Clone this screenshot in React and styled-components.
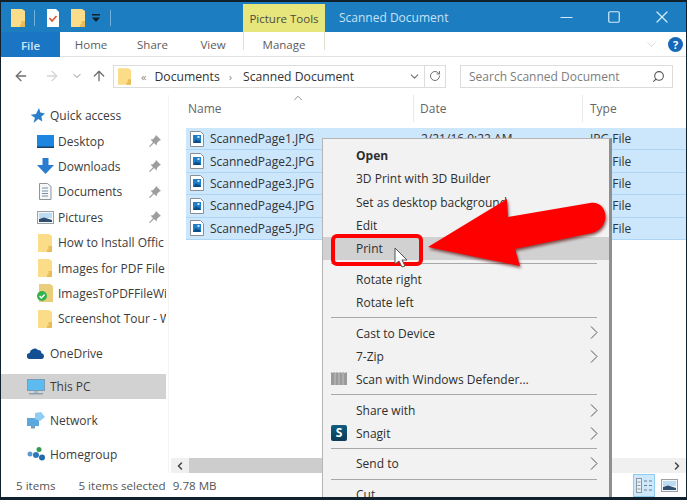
import styled, { createGlobalStyle } from "styled-components";
import { ArrowLeft, ArrowRight, ArrowUp, ChevronDown, ChevronUp, ChevronLeft, ChevronRight, Minus, Square, X, RotateCw, Search } from "lucide-react";

const GlobalStyle = createGlobalStyle`
  * { box-sizing: border-box; }
  html, body { margin: 0; padding: 0; background: #fff; overflow: hidden; }
  body { font-family: "Open Sans", "Noto Sans", sans-serif; font-size: 12px; color: #3a3a3a; }
`;

const Window = styled.div`
  position: relative;
  width: 687px;
  height: 500px;
  display: flex;
  flex-direction: column;
  overflow: hidden;
  background: #fff;
  border-style: solid;
  border-color: #10202c;
  border-width: 2px 1px 3px 1px;
`;

const TitleBar = styled.div`
  height: 30px;
  flex: none;
  display: flex;
  background: #1d7dc1;
`;

const QuickBar = styled.div`
  width: 242px;
  display: flex;
  align-items: center;
  padding-left: 10px;
  margin-top: 2px;
`;

const QuickSep = styled.div`
  width: 1px;
  height: 16px;
  margin: 0 12px 0 9px;
  background: #6fb0dc;
`;

const PictureTools = styled.div`
  width: 82px;
  margin-top: 2px;
  display: flex;
  align-items: center;
  justify-content: center;
  background: #e6e67c;
  color: #4c4c3c;
  font-size: 11.5px;
`;

const WindowTitle = styled.div`
  margin-left: 14px;
  margin-top: 1px;
  align-self: center;
  color: #c6e2f6;
  font-size: 12px;
`;

const Controls = styled.div`
  margin-left: auto;
  display: flex;
`;

const ControlButton = styled.div`
  width: 48px;
  display: flex;
  align-items: center;
  justify-content: center;
  color: #d5ebfa;
`;

const RibbonTabs = styled.div`
  height: 25px;
  flex: none;
  display: flex;
  align-items: stretch;
  border-bottom: 1px solid #e2e2e2;
`;

const Tab = styled.div`
  width: ${(p) => p.$width}px;
  display: flex;
  align-items: center;
  justify-content: center;
  padding-top: 1px;
  font-size: 11.5px;
  color: #5c5c5c;
`;

const FileTab = styled(Tab)`
  background: #1a76c4;
  color: #cfe6f8;
  font-weight: 600;
  margin-bottom: -1px;
`;

const ManageTab = styled(Tab)`
  border-left: 1px solid #e0e0d0;
  border-right: 1px solid #e0e0d0;
  margin-bottom: 6px;
  padding-top: 6px;
`;

const RibbonRight = styled.div`
  margin-left: auto;
  display: flex;
  align-items: center;
  gap: 9px;
  padding-right: 3px;
  color: #c4c4c4;
`;

const HelpDot = styled.div`
  width: 15px;
  height: 15px;
  border-radius: 50%;
  background: #1567b8;
  color: #fff;
  font-size: 11px;
  font-weight: 700;
  display: flex;
  align-items: center;
  justify-content: center;
`;

const AddressRow = styled.div`
  height: 38px;
  flex: none;
  display: flex;
  align-items: center;
  padding-left: 12px;
`;

const NavButton = styled.div`
  display: flex;
  margin-left: ${(p) => p.$gap || 0}px;
  color: ${(p) => p.$color};
`;

const AddressBox = styled.div`
  margin-left: 6px;
  width: 333px;
  height: 23px;
  display: flex;
  align-items: center;
  border: 1px solid #dcdcdc;
  padding-left: 4px;
  color: #333;
  font-size: 12.2px;
`;

const Crumb = styled.span`
  margin-left: ${(p) => p.$gap}px;
`;

const CrumbSep = styled.span`
  margin-left: ${(p) => p.$gap}px;
  color: #8a8a8a;
  font-size: 11px;
`;

const AddressEnd = styled.div`
  margin-left: auto;
  height: 100%;
  display: flex;
  align-items: center;
  color: #707070;
`;

const RefreshCell = styled.div`
  width: 21px;
  height: 100%;
  margin-left: 3px;
  display: flex;
  align-items: center;
  justify-content: center;
  border-left: 1px solid #dcdcdc;
`;

const SearchBox = styled.div`
  margin-left: 14px;
  width: 213px;
  height: 23px;
  display: flex;
  align-items: center;
  justify-content: space-between;
  padding: 0 7px 0 8px;
  border: 1px solid #dcdcdc;
  color: #7d7d7d;
  font-size: 12px;
`;

const SearchGlyph = styled(Search)`
  color: #555;
  transform: scaleX(-1);
`;

const Main = styled.div`
  flex: 1;
  min-height: 0;
  display: flex;
`;

const Sidebar = styled.div`
  width: 168px;
  flex: none;
  padding-top: 8px;
  border-right: 1px solid #f4f4f4;
`;

const NavRow = styled.div`
  width: 165px;
  height: 25.4px;
  margin-top: ${(p) => p.$top || 0}px;
  display: flex;
  align-items: center;
  white-space: nowrap;
  overflow: hidden;
  font-size: 12px;
  color: #3c3c3c;
  background: ${(p) => (p.$active ? "#d2d2d2" : "transparent")};
  padding-left: ${(p) => (p.$child ? 35 : 26)}px;
`;

const NavIcon = styled.span`
  width: 18px;
  margin-right: ${(p) => (p.$child ? 4 : 5)}px;
  flex: none;
  display: flex;
  align-items: center;
  justify-content: center;
`;

const NavLabel = styled.span`
  flex: 1;
  overflow: hidden;
`;

const PinSlot = styled.span`
  width: 17px;
  flex: none;
  display: flex;
`;

const Content = styled.div`
  flex: 1;
  min-width: 0;
  display: flex;
  flex-direction: column;
`;

const ColumnHead = styled.div`
  position: relative;
  height: 33px;
  flex: none;
  display: grid;
  grid-template-columns: 245px 169px 1fr;
  align-items: center;
  color: #666;
  font-size: 12px;
  padding-bottom: 6px;
`;

const HeadCell = styled.div`
  height: 27px;
  display: flex;
  align-items: center;
  padding-left: ${(p) => p.$pad}px;
  border-right: 1px solid ${(p) => (p.$plain ? "transparent" : "#e8e8e8")};
`;

const SortCaret = styled.span`
  position: absolute;
  left: 122px;
  top: -4px;
  display: flex;
  color: #808080;
`;

const FileList = styled.div`
  flex: 1;
  min-height: 0;
  padding-left: 17px;
`;

const FileRow = styled.div`
  height: 22.4px;
  display: grid;
  grid-template-columns: 235px 169px 1fr;
  align-items: center;
  background: #cce6fb;
  border-bottom: 1px solid #aed6f4;
  font-size: 12px;
  color: #333;
  white-space: nowrap;
`;

const FileName = styled.div`
  display: flex;
  align-items: center;
  gap: 6px;
  padding-left: 4px;
`;

const ScrollBar = styled.div`
  height: 15px;
  flex: none;
  display: flex;
  align-items: center;
  background: #f0f0f0;
  margin-left: 2px;
  color: #444;
`;

const ScrollArrow = styled.div`
  width: 18px;
  height: 100%;
  flex: none;
  display: flex;
  align-items: center;
  justify-content: center;
`;

const ScrollThumb = styled.div`
  height: 100%;
  flex: 1;
  margin-right: 60px;
  background: #cdcdcd;
`;

const StatusBar = styled.div`
  height: 24px;
  flex: none;
  display: flex;
  align-items: center;
  padding-left: 15px;
  font-size: 11.6px;
  color: #555;
`;

const StatusText = styled.span`
  margin-left: ${(p) => p.$gap || 0}px;
  white-space: nowrap;
`;

const ViewButtons = styled.div`
  margin-left: auto;
  height: 100%;
  display: flex;
  align-items: center;
  gap: 3px;
  padding-right: 6px;
`;

const ViewButton = styled.div`
  width: 22px;
  height: 23px;
  display: flex;
  align-items: center;
  justify-content: center;
  background: ${(p) => (p.$on ? "#cde8fa" : "transparent")};
  border: 1px solid ${(p) => (p.$on ? "#8fcdf0" : "transparent")};
`;

const ContextMenu = styled.div`
  position: absolute;
  left: 321px;
  top: 136px;
  width: 290px;
  background: #f2f2f2;
  border: 1px solid #b5b5b5;
  border-right: 3px solid #8f8f8f;
  padding-top: 5px;
  font-size: 12px;
  color: #2e2e2e;
`;

const MenuItem = styled.div`
  position: relative;
  height: 23.3px;
  display: flex;
  align-items: center;
  padding-left: 33px;
  white-space: nowrap;
  font-weight: ${(p) => (p.$bold ? 700 : 400)};
  background: ${(p) => (p.$hot ? "#d1d1d1" : "transparent")};
`;

const MenuIcon = styled.span`
  position: absolute;
  left: 8px;
  top: 3px;
  display: flex;
`;

const SubArrow = styled.svg`
  position: absolute;
  right: 11px;
  top: 5px;
`;

const MenuSep = styled.div`
  height: 1px;
  margin: 3px 12px 3.2px 8px;
  background: #a8a8a8;
`;

const SnagitBadge = styled.span`
  width: 16px;
  height: 16px;
  border-radius: 2px;
  background: linear-gradient(#0f5d80, #0b3a55);
  color: #fff;
  font-size: 12px;
  font-weight: 700;
  line-height: 16px;
  text-align: center;
`;

const PrintCallout = styled.div`
  position: absolute;
  left: 330px;
  top: 232px;
  width: 92px;
  height: 32px;
  border: 4.5px solid #ff0000;
  border-radius: 6px;
`;

const BigArrow = styled.svg`
  position: absolute;
  left: 419px;
  top: 188px;
  filter: drop-shadow(1px 2px 1.5px rgba(80, 0, 0, 0.65));
`;

const Pointer = styled.svg`
  position: absolute;
  left: 393px;
  top: 245px;
`;

const FolderIcon = ({ w = 14, h = 18 }) => (
  <svg width={w} height={h} viewBox="0 0 14 18">
    <path d="M0 0h11l3 2v16H0z" fill="#fbdc88" />
    <path d="M14 12v6H9v-2.5h1.5V12z" fill="#e8bd58" />
  </svg>
);

const CheckFolder = () => (
  <svg width="16" height="18" viewBox="0 0 16 18">
    <path d="M2 0h11l3 2v16H2z" fill="#e9cf7c" />
    <circle cx="5" cy="12" r="5" fill="#32b24a" />
    <path d="M2.6 12l1.8 1.9 3.2-3.4" fill="none" stroke="#fff" strokeWidth="1.4" />
  </svg>
);

const ImageFileIcon = () => (
  <svg width="14" height="16" viewBox="0 0 14 16">
    <path d="M.5.5h10l3 3v12H.5z" fill="#fff" stroke="#8a8f96" />
    <rect x="3" y="4" width="8" height="8" fill="#1e7fc8" />
    <path d="M3 12l3-4 2 2 1-1 2 3z" fill="#0d4d86" />
    <rect x="7.5" y="5" width="2" height="2" fill="#cfe8fa" />
  </svg>
);

const PinIcon = () => (
  <svg width="12" height="12" viewBox="0 0 12 12">
    <path d="M7 0l5 5-1.5.6L8 8l-.4 2.5L5 8l-4 4-1-.5L4 7.3 1.5 4.6 4 4.2 6.4 1.6z" fill="#9d9d9d" />
  </svg>
);

const StarIcon = () => (
  <svg width="18" height="15" viewBox="-3 0 18 15">
    <path d="M9 0l1.4 4.6L15 5.6l-3.6 3 .9 5L8.3 11 3.6 15l1.3-5.2L.6 6.8l5.4-.8z" fill="#2a7fc9" />
  </svg>
);

const DesktopIcon = () => (
  <svg width="17" height="13" viewBox="0 0 17 13">
    <rect width="17" height="13" fill="#1c86e0" />
    <rect y="11.5" width="17" height="1.5" fill="#17416a" />
  </svg>
);

const DownloadIcon = () => (
  <svg width="17" height="16" viewBox="0 0 17 16">
    <path d="M5.5 0h6v7H17l-8.5 9L0 7h5.5z" fill="#2a7cd0" />
  </svg>
);

const DocumentIcon = () => (
  <svg width="14" height="17" viewBox="0 0 14 17">
    <path d="M1.5.5h8l3.500 3v13h-11.500z" fill="#f5f7f9" stroke="#8e959c" />
    <path d="M4 5h6M4 8h6M4 10.500h6M4 13h6" stroke="#7891a8" />
  </svg>
);

const PictureIcon = () => (
  <svg width="17" height="13" viewBox="0 0 17 13">
    <rect x=".5" y=".5" width="16" height="12" fill="#f4f6f8" stroke="#9aa0a6" />
    <rect x="2" y="2" width="13" height="5" fill="#bcdcf2" />
    <path d="M2 11V8l5-1.500L15 9v2z" fill="#2f4f70" />
  </svg>
);

const CloudIcon = () => (
  <svg width="18" height="12" viewBox="0 0 18 12">
    <path d="M3 12a3 3 0 0 1-.4-6A5 5 0 0 1 11 3a3.500 3.500 0 0 1 3.500 3.200A3 3 0 0 1 15 12z" fill="#144f94" />
  </svg>
);

const MonitorIcon = () => (
  <svg width="18" height="16" viewBox="0 0 18 16">
    <rect x=".5" y=".5" width="17" height="11" fill="#5cbcf0" stroke="#7a9db5" />
    <rect x="7" y="12" width="4" height="2" fill="#a8b8c4" />
    <rect x="2" y="14" width="14" height="1.500" fill="#8aa0b0" />
  </svg>
);

const NetworkIcon = () => (
  <svg width="18" height="17" viewBox="0 0 18 17">
    <rect x="0" y="6" width="12" height="8" fill="#5ba8dc" />
    <path d="M8 1l6-1 4 5-5 4-5-2z" fill="#8fcdf2" />
    <rect x="4" y="14" width="4" height="2.500" fill="#7a9db5" />
  </svg>
);

const HomegroupIcon = () => (
  <svg width="18" height="14" viewBox="0 0 18 14">
    <circle cx="3" cy="7" r="2.500" fill="#5c9bd0" />
    <circle cx="12" cy="2.500" r="2.500" fill="#2f9a4e" />
    <circle cx="9" cy="8" r="3" fill="#2c78bc" />
    <circle cx="15" cy="10.500" r="3" fill="#246aa8" />
  </svg>
);

const ChecklistIcon = () => (
  <svg width="12" height="18" viewBox="0 0 12 18">
    <path d="M0 0h9l3 3v15H0z" fill="#fff" />
    <path d="M2.500 9l2.500 3 4.500-5" fill="none" stroke="#d8512d" strokeWidth="1.600" />
  </svg>
);

const DropMark = () => (
  <svg width="10" height="9" viewBox="0 0 10 9">
    <rect x="1" y="0" width="8" height="1.500" fill="#10202c" />
    <path d="M1 3.500h8L5 8z" fill="#10202c" />
  </svg>
);

const DefenderIcon = () => (
  <svg width="16" height="14" viewBox="0 0 16 14">
    <path d="M0 1l2 1 1-1 2 1 1-1 2 1 1-1 2 1 1-1 2 1 2-1v13H0z" fill="#9a9a9a" />
    <path d="M4 2v12M8 2v12M12 2v12" stroke="#c2c2c2" />
  </svg>
);

const DetailsIcon = () => (
  <svg width="17" height="15" viewBox="0 0 17 15">
    <rect x=".5" y=".5" width="5" height="14" fill="#e7f1f8" stroke="#8a97a2" />
    <path d="M1.500 4h3M1.500 7.500h3M1.500 11h3" stroke="#8a97a2" />
    <path d="M8 3h3M13 3h3M8 7.500h3M13 7.500h3M8 12h3M13 12h3" stroke="#6d7d8a" />
  </svg>
);

const files = ["ScannedPage1.JPG", "ScannedPage2.JPG", "ScannedPage3.JPG", "ScannedPage4.JPG", "ScannedPage5.JPG"];

const pinned = [
  ["Desktop", <DesktopIcon />],
  ["Downloads", <DownloadIcon />],
  ["Documents", <DocumentIcon />],
  ["Pictures", <PictureIcon />],
];

const recent = [
  ["How to Install Offic", <FolderIcon />],
  ["Images for PDF File", <FolderIcon />],
  ["ImagesToPDFFileWi", <CheckFolder />],
  ["Screenshot Tour - W", <FolderIcon />],
];

const More = () => (
  <SubArrow width="8" height="13" viewBox="0 0 8 13">
    <path d="M1 .5l6 6-6 6" fill="none" stroke="#555" />
  </SubArrow>
);

function App() {
  return (
    <Window>
      <GlobalStyle />
      <TitleBar>
        <QuickBar>
          <FolderIcon />
          <QuickSep />
          <ChecklistIcon />
          <NavButton $gap={12}><FolderIcon /></NavButton>
          <NavButton $gap={6}><DropMark /></NavButton>
          <QuickSep />
        </QuickBar>
        <PictureTools>Picture Tools</PictureTools>
        <WindowTitle>Scanned Document</WindowTitle>
        <Controls>
          <ControlButton><Minus size={19} strokeWidth={1.2} absoluteStrokeWidth /></ControlButton>
          <ControlButton><Square size={14} strokeWidth={1.2} absoluteStrokeWidth /></ControlButton>
          <ControlButton><X size={20} strokeWidth={1.2} absoluteStrokeWidth /></ControlButton>
        </Controls>
      </TitleBar>

      <RibbonTabs>
        <FileTab $width={59}>File</FileTab>
        <Tab $width={62}>Home</Tab>
        <Tab $width={61}>Share</Tab>
        <Tab $width={60}>View</Tab>
        <ManageTab $width={82}>Manage</ManageTab>
        <RibbonRight>
          <ChevronDown size={15} strokeWidth={1} />
          <HelpDot>?</HelpDot>
        </RibbonRight>
      </RibbonTabs>

      <AddressRow>
        <NavButton $color="#6e6e6e"><ArrowLeft size={16} /></NavButton>
        <NavButton $gap={15} $color="#d4d4d4"><ArrowRight size={16} /></NavButton>
        <NavButton $gap={11} $color="#8c8c8c"><ChevronDown size={12} /></NavButton>
        <NavButton $gap={8} $color="#6e6e6e"><ArrowUp size={16} /></NavButton>
        <AddressBox>
          <FolderIcon w={13} h={17} />
          <CrumbSep $gap={10}>«</CrumbSep>
          <Crumb $gap={8}>Documents</Crumb>
          <CrumbSep $gap={9}>›</CrumbSep>
          <Crumb $gap={11}>Scanned Document</Crumb>
          <AddressEnd>
            <ChevronDown size={13} />
            <RefreshCell><RotateCw size={12} /></RefreshCell>
          </AddressEnd>
        </AddressBox>
        <SearchBox>
          Search Scanned Document
          <SearchGlyph size={13} />
        </SearchBox>
      </AddressRow>

      <Main>
        <Sidebar>
          <NavRow>
            <NavIcon><StarIcon /></NavIcon>
            <NavLabel>Quick access</NavLabel>
          </NavRow>
          {pinned.map(([label, icon]) => (
            <NavRow $child key={label}>
              <NavIcon $child>{icon}</NavIcon>
              <NavLabel>{label}</NavLabel>
              <PinSlot><PinIcon /></PinSlot>
            </NavRow>
          ))}
          {recent.map(([label, icon]) => (
            <NavRow $child key={label}>
              <NavIcon $child>{icon}</NavIcon>
              <NavLabel>{label}</NavLabel>
            </NavRow>
          ))}
          <NavRow $top={9}>
            <NavIcon><CloudIcon /></NavIcon>
            <NavLabel>OneDrive</NavLabel>
          </NavRow>
          <NavRow $top={8} $active>
            <NavIcon><MonitorIcon /></NavIcon>
            <NavLabel>This PC</NavLabel>
          </NavRow>
          <NavRow $top={9}>
            <NavIcon><NetworkIcon /></NavIcon>
            <NavLabel>Network</NavLabel>
          </NavRow>
          <NavRow $top={8}>
            <NavIcon><HomegroupIcon /></NavIcon>
            <NavLabel>Homegroup</NavLabel>
          </NavRow>
        </Sidebar>

        <Content>
          <ColumnHead>
            <SortCaret><ChevronUp size={14} strokeWidth={1.5} /></SortCaret>
            <HeadCell $pad={19}>Name</HeadCell>
            <HeadCell $pad={6}>Date</HeadCell>
            <HeadCell $pad={7} $plain>Type</HeadCell>
          </ColumnHead>
          <FileList>
            {files.map((name) => (
              <FileRow key={name}>
                <FileName>
                  <ImageFileIcon />
                  {name}
                </FileName>
                <span>2/21/16 9:22 AM</span>
                <span>JPG File</span>
              </FileRow>
            ))}
          </FileList>
          <ScrollBar>
            <ScrollArrow><ChevronLeft size={12} strokeWidth={3} /></ScrollArrow>
            <ScrollThumb />
            <ScrollArrow><ChevronRight size={12} strokeWidth={3} /></ScrollArrow>
          </ScrollBar>
        </Content>
      </Main>

      <StatusBar>
        <StatusText>5 items</StatusText>
        <StatusText $gap={23}>5 items selected</StatusText>
        <StatusText $gap={7}>9.78 MB</StatusText>
        <ViewButtons>
          <ViewButton $on><DetailsIcon /></ViewButton>
          <ViewButton><PictureIcon /></ViewButton>
        </ViewButtons>
      </StatusBar>

      <ContextMenu>
        <MenuItem $bold>Open</MenuItem>
        <MenuItem>3D Print with 3D Builder</MenuItem>
        <MenuItem>Set as desktop background</MenuItem>
        <MenuItem>Edit</MenuItem>
        <MenuItem $hot>Print</MenuItem>
        <MenuSep />
        <MenuItem>Rotate right</MenuItem>
        <MenuItem>Rotate left</MenuItem>
        <MenuSep />
        <MenuItem>Cast to Device<More /></MenuItem>
        <MenuItem>7-Zip<More /></MenuItem>
        <MenuItem>
          <MenuIcon><DefenderIcon /></MenuIcon>
          Scan with Windows Defender...
        </MenuItem>
        <MenuSep />
        <MenuItem>Share with<More /></MenuItem>
        <MenuItem>
          <MenuIcon><SnagitBadge>S</SnagitBadge></MenuIcon>
          Snagit<More />
        </MenuItem>
        <MenuSep />
        <MenuItem>Send to<More /></MenuItem>
        <MenuSep />
        <MenuItem>Cut</MenuItem>
      </ContextMenu>

      <PrintCallout />
      <BigArrow width="200" height="85" viewBox="0 0 200 85">
        <path d="M8 57L87 9l1 18 82-14c12-2 17 9 15 17-2 8-7 11-13 13L95 59l5 17z" fill="#ff0000" />
      </BigArrow>
      <Pointer width="16" height="22" viewBox="0 0 16 22">
        <path d="M1 1v16l4-3 3 6 3-1-3-6h5z" fill="#fff" stroke="#555" />
      </Pointer>
    </Window>
  );
}

export default App;
